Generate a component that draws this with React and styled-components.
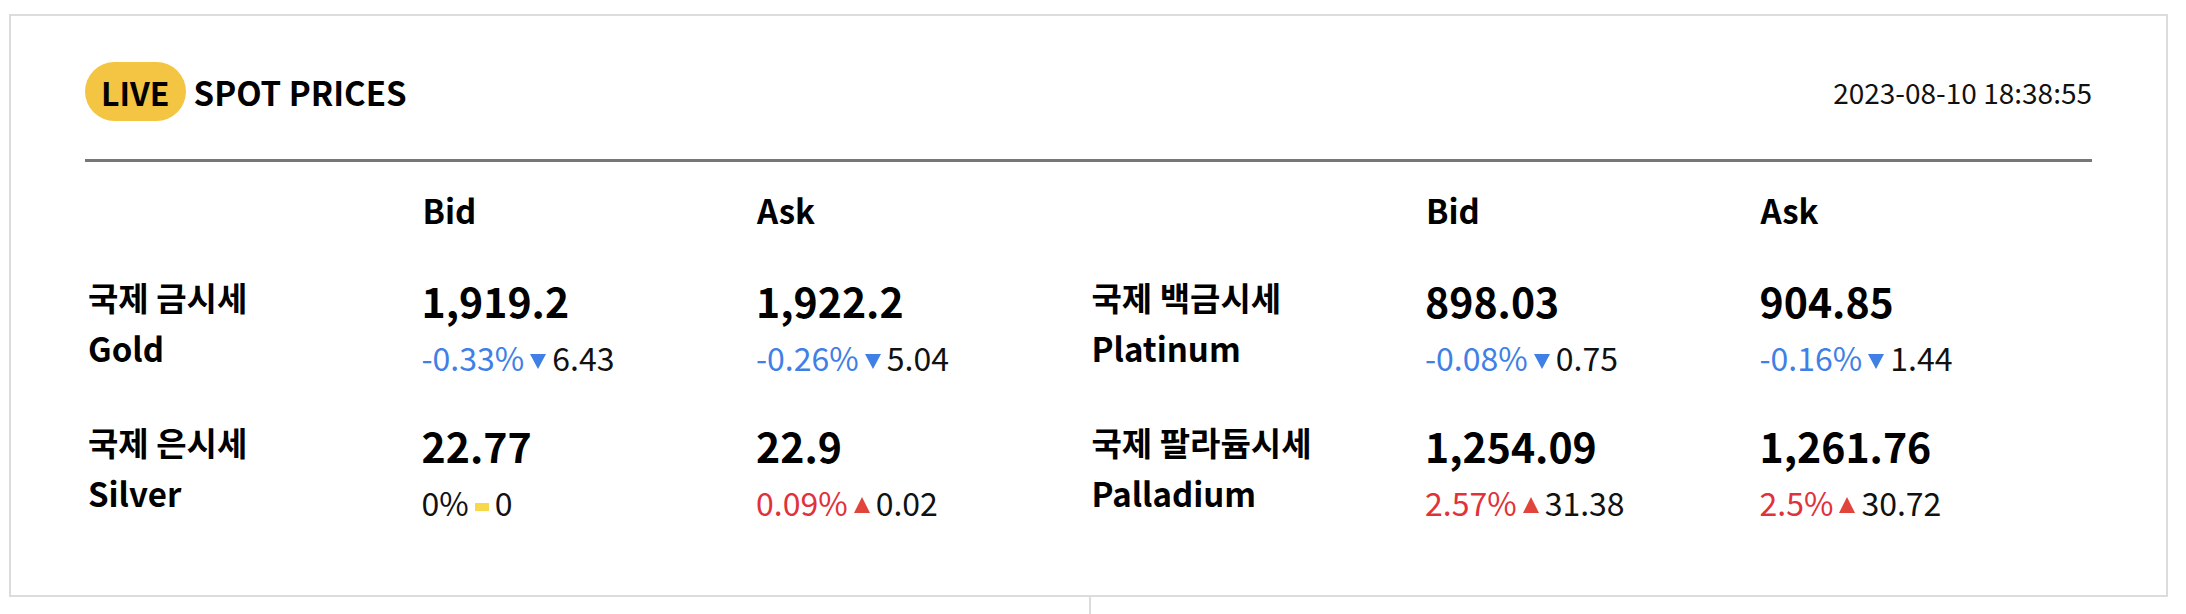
import React from "react";
import styled, { createGlobalStyle } from "styled-components";

const Global = createGlobalStyle`
  html, body { margin: 0; padding: 0; background: #fff; }
  body { font-family: "Noto Sans CJK KR", "Noto Sans", sans-serif; color: #111; }
`;

const Card = styled.section`
  box-sizing: border-box;
  width: 2159px;
  margin: 14px 0 0 9px;
  border: 2px solid #dcdcdc;
  padding: 46px 74px 72px;
  background: #fff;
`;

const Header = styled.header`
  display: flex;
  align-items: center;
  justify-content: space-between;
  padding-bottom: 38px;
  border-bottom: 3px solid #777;
`;

const TitleWrap = styled.div`
  display: flex;
  align-items: center;
  gap: 8px;
`;

const Pill = styled.span`
  display: inline-flex;
  align-items: center;
  height: 59px;
  padding: 0 16px;
  border-radius: 30px;
  background: #f4c443;
  font-size: 32px;
  font-weight: 700;
  color: #000;
`;

const Title = styled.h1`
  margin: 0;
  font-size: 33px;
  font-weight: 700;
  color: #000;
`;

const Stamp = styled.time`
  font-size: 28px;
  color: #111;
`;

const Board = styled.div`
  display: grid;
  grid-template-columns: 1fr 1fr;
  padding-top: 25px;
`;

const Half = styled.div`
  display: grid;
  grid-template-columns: repeat(3, 1fr);
  grid-template-rows: 46px 104px 104px;
  row-gap: 41px;
`;

const HeadCell = styled.div`
  font-size: 33px;
  font-weight: 700;
  line-height: 46px;
  color: #000;
  padding-left: 3px;
`;

const Spacer = styled.div``;

const Label = styled.div`
  margin-top: -2px;
  font-size: 33px;
  font-weight: 700;
  line-height: 51px;
  color: #000;
  padding-left: 3px;
`;

const Quote = styled.div`
  display: flex;
  flex-direction: column;
  padding-left: 2px;
`;

const Price = styled.div`
  font-size: 41px;
  font-weight: 700;
  line-height: 52px;
  color: #000;
`;

const Change = styled.div`
  display: flex;
  align-items: center;
  gap: 6px;
  margin-top: 11px;
  font-size: 32px;
  line-height: 40px;
  color: #111;
`;

const Pct = styled.span`
  color: ${(p) => (p.$dir === "down" ? "#3f7fe6" : p.$dir === "up" ? "#e0323a" : "#111")};
`;

const Tri = styled.span`
  display: inline-block;
  width: 0;
  height: 0;
  border-left: 8px solid transparent;
  border-right: 8px solid transparent;
  ${(p) =>
    p.$dir === "down"
      ? `border-top: 15px solid #3f7fe6; margin-top: 8px;`
      : `border-bottom: 16px solid #e0443a; margin-top: 6px;`}
`;

const Flat = styled.span`
  display: inline-block;
  width: 14px;
  height: 8px;
  margin-top: 9px;
  background: #f6d84a;
`;

const Lower = styled.div`
  display: grid;
  grid-template-columns: 1080px 1fr;
  width: 2159px;
  margin-left: 9px;
  height: 18px;
`;

const LowerCol = styled.div`
  border-left: ${(p) => (p.$divider ? "2px solid #dcdcdc" : "none")};
`;

const data = [
  [
    { ko: "국제 금시세", en: "Gold", bid: ["1,919.2", "-0.33%", "down", "6.43"], ask: ["1,922.2", "-0.26%", "down", "5.04"] },
    { ko: "국제 은시세", en: "Silver", bid: ["22.77", "0%", "flat", "0"], ask: ["22.9", "0.09%", "up", "0.02"] },
  ],
  [
    { ko: "국제 백금시세", en: "Platinum", bid: ["898.03", "-0.08%", "down", "0.75"], ask: ["904.85", "-0.16%", "down", "1.44"] },
    { ko: "국제 팔라듐시세", en: "Palladium", bid: ["1,254.09", "2.57%", "up", "31.38"], ask: ["1,261.76", "2.5%", "up", "30.72"] },
  ],
];

function QuoteCell({ q }) {
  const [price, pct, dir, diff] = q;
  return (
    <Quote>
      <Price>{price}</Price>
      <Change>
        <Pct $dir={dir}>{pct}</Pct>
        {dir === "flat" ? <Flat /> : <Tri $dir={dir} />}
        <span>{diff}</span>
      </Change>
    </Quote>
  );
}

export default function App() {
  return (
    <>
      <Global />
      <Card>
        <Header>
          <TitleWrap>
            <Pill>LIVE</Pill>
            <Title>SPOT PRICES</Title>
          </TitleWrap>
          <Stamp>2023-08-10 18:38:55</Stamp>
        </Header>
        <Board>
          {data.map((half, i) => (
            <Half key={i}>
              <Spacer />
              <HeadCell>Bid</HeadCell>
              <HeadCell>Ask</HeadCell>
              {half.map((m) => (
                <React.Fragment key={m.en}>
                  <Label>
                    {m.ko}
                    <br />
                    {m.en}
                  </Label>
                  <QuoteCell q={m.bid} />
                  <QuoteCell q={m.ask} />
                </React.Fragment>
              ))}
            </Half>
          ))}
        </Board>
      </Card>
      <Lower>
        <LowerCol />
        <LowerCol $divider />
      </Lower>
    </>
  );
}
